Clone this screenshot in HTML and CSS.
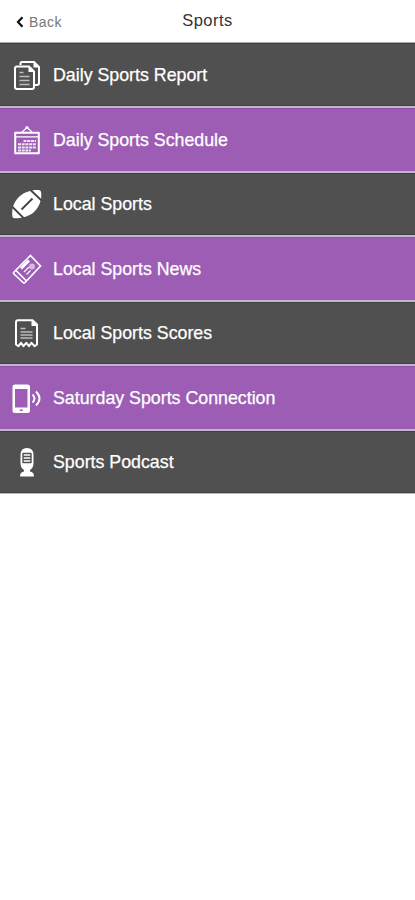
FILE: index.html
```html
<!DOCTYPE html>
<html lang="en">
<head>
<meta charset="utf-8">
<title>Sports</title>
<link rel="stylesheet" href="styles.css">
</head>
<body>
<header class="bar">
  <a class="back"><svg class="chevron" viewBox="0 0 8 12"><path d="M6.500 1.300 2 6l4.500 4.700"/></svg><span>Back</span></a>
  <h1 class="title">Sports</h1>
</header>
<nav class="menu">
  <a class="row">
    <svg class="icon" viewBox="0 0 32 32"><g class="line"><path d="M9.500 6V4.500Q9.500 3 11 3H23l5 5v16q0 2-2 2h-2"/><path d="M6 7.500H18l5 5V28q0 2-2 2H6q-2 0-2-2V9.500q0-2 2-2Z"/></g><path class="solid" d="M17.500 7v6H23.500ZM22.500 3v5.500H28Z"/><path class="gray" d="M8.500 13.500h4M8.500 17.500h10M8.500 21.500h10M8.500 25.500h10"/></svg>
    <span class="label">Daily Sports Report</span>
  </a>
  <a class="row purple">
    <svg class="icon" viewBox="0 0 32 32"><path class="line" d="M4.200 8.700H27.800V29.300H4.200Z"/><path class="fine" d="M11 8l5-4.500L21 8M4 12.800H28"/><circle class="solid" cx="16" cy="3.500" r="1.600"/><path class="dash" d="M12.500 17H25M7 20.300H25M7 23.500H25M7 26.500H20"/></svg>
    <span class="label">Daily Sports Schedule</span>
  </a>
  <a class="row">
    <svg class="icon" viewBox="0 0 32 32"><path class="solid" d="M2.500 30Q1 29.500 1.200 24.500C1.500 17 4.500 12 9 8S21 1.500 27.500 2Q30 2.200 30.200 5C31 12 28 19 23.500 23.500S11 31 2.500 30Z"/><path class="cut" d="M1.500 19 12.500 30M19.500 2 30.500 12.500M10.500 21.500 21.500 10.500"/></svg>
    <span class="label">Local Sports</span>
  </a>
  <a class="row purple">
    <svg class="icon" viewBox="0 0 32 32"><g class="ticket"><path d="M19.500 2.500 29.500 13 14 29.500q-1 1-2 0L3 21q-1-1 0-2Z"/><path d="M5 17.500 15.500 28"/><path class="thick" d="M10 15.500l8-8"/><path class="fine" d="M13 19l5-5M15.500 21.500l4-4"/></g><circle class="faded" cx="21" cy="13.500" r="3"/></svg>
    <span class="label">Local Sports News</span>
  </a>
  <a class="row">
    <svg class="icon" viewBox="0 0 32 32"><path class="line" d="M7 3.200H21.500L26 7.500V27.500L23.500 29.200 20.500 25.800 18 29.200 15.300 25.800 12.500 29.200 10 25.800 7.500 29.200 5 27.500V5.200q0-2 2-2Z"/><path class="solid" d="M20.500 3v6H26.500Z"/><path class="gray" d="M9.500 11.500h5M9.500 15h12M9.500 18h12M9.500 21h12"/></svg>
    <span class="label">Local Sports Scores</span>
  </a>
  <a class="row purple">
    <svg class="icon" viewBox="0 0 32 32"><path class="solid" fill-rule="evenodd" d="M4 2.500H16.500q2.500 0 2.500 2.500V28.500q0 2.500-2.500 2.500H4q-2.500 0-2.500-2.500V5Q1.500 2.500 4 2.500ZM4 7V25.500H16.500V7ZM8.800 27.500v1.500h3v-1.500Z"/><path class="wave" d="M21.500 12.500q4 4 0 8M25 9.500q7 7 0 14"/></svg>
    <span class="label">Saturday Sports Connection</span>
  </a>
  <a class="row">
    <svg class="icon" viewBox="0 0 32 32"><path class="solid" d="M9.500 9q0-7 6.500-7t6.500 7v8q0 5-3.500 7v1.500q4 .5 4 5H9q0-4.500 4-5V24q-3.500-2-3.500-7Z"/><path class="slots" d="M12 7.500h8M12 10.500h8M12 13.500h8M12 16.500h8M12 7v10M20 7v10"/></svg>
    <span class="label">Sports Podcast</span>
  </a>
</nav>
</body>
</html>
```
FILE: styles.css
```css
body {
  margin: 0;
  background: #fff;
  font-family: "Liberation Sans", Arial, sans-serif;
}
.bar {
  display: grid;
  grid-template-columns: 1fr auto 1fr;
  height: 42px;
  line-height: 20px;
}
.back {
  display: flex;
  align-items: center;
  gap: 5px;
  height: 20px;
  padding: 12px 0 0 16px;
  font-size: 14px;
  letter-spacing: .5px;
  color: #777;
}
.chevron {
  width: 8px;
  height: 12px;
  fill: none;
  stroke: #111;
  stroke-width: 2.200;
}
.title {
  margin: 10px 0 0;
  font-size: 16.500px;
  letter-spacing: .5px;
  font-weight: 400;
  color: #333;
}
.row {
  display: flex;
  align-items: center;
  box-sizing: border-box;
  height: 64.500px;
  padding: .6px 0 0 11px;
  gap: 10px;
  background: #505050;
  color: #fff;
  border-top: 2px solid #c3b5ca;
  box-shadow: inset 0 1px #414141, inset 0 -1px #414141;
}
.row:first-child {
  height: 64px;
  border-top: 1px solid #aaa;
}
.row:last-child {
  height: 65px;
  border-bottom: 1px solid #bbb;
}
.purple {
  background: #9d5db5;
  box-shadow: inset 0 1px #914fad;
}
.icon {
  width: 32px;
  height: 32px;
  flex: none;
  fill: none;
  stroke: #fff;
}
.line { stroke-width: 2; stroke-linejoin: round; }
.fine { stroke-width: 1.200; }
.dash { stroke-width: 1.900; stroke-dasharray: 3 .7; opacity: .85; }
.solid { fill: #fff; stroke: none; }
.cut { stroke: #444; stroke-width: 1.800; }
.ticket { stroke-width: 1.700; }
.thick { stroke-width: 3; }
.faded { fill: #d9b8e4; stroke: none; }
.gray { stroke: #bbb; stroke-width: 1.700; }
.wave { stroke-width: 1.900; }
.slots { stroke: #505050; stroke-width: 1.400; }
.label {
  font-size: 17.800px;
  line-height: 22px;
  white-space: nowrap;
  -webkit-text-stroke: .25px #fff;
}
```
